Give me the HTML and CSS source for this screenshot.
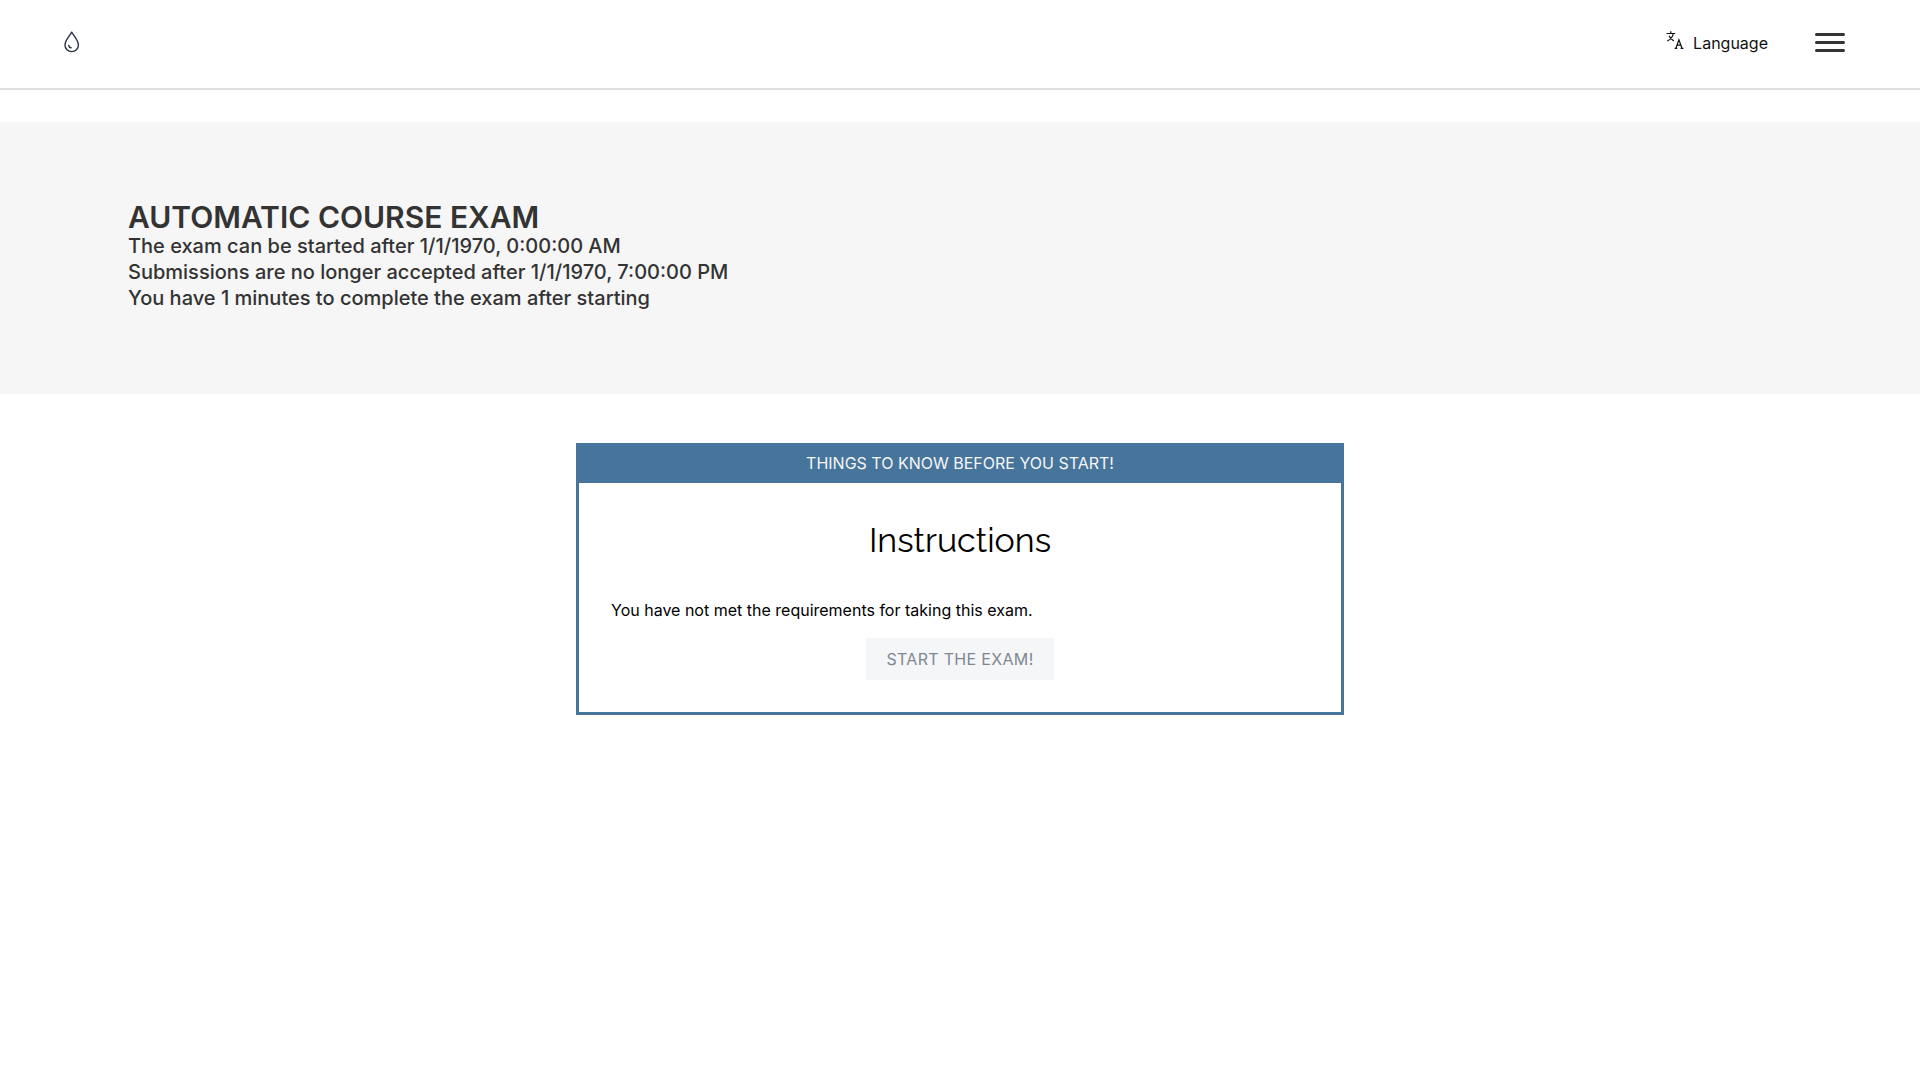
FILE: index.html
```html
<!DOCTYPE html>
<html lang="en">
<head>
<meta charset="utf-8">
<meta name="viewport" content="width=device-width, initial-scale=1">
<title>Automatic course exam</title>
<link rel="stylesheet" href="styles.css">
</head>
<body>
<header class="site-header">
  <a class="logo" href="#" aria-label="Home">
    <svg width="16" height="22" viewBox="0 0 16 22" fill="none" stroke="#2b3244" stroke-width="1.4" stroke-linecap="round" stroke-linejoin="round">
      <path d="M7.700 1.200C5.300 5.200 1 9.400 1 13.900C1 18 4 20.600 7.700 20.600S14.400 18 14.400 13.900C14.400 9.400 10.100 5.200 7.700 1.200Z"/>
      <path d="M4.700 14.500C4.900 15.800 5.800 16.600 7 16.700" stroke-width="1.600"/>
    </svg>
  </a>
  <nav class="site-nav" aria-label="Main">
    <button class="language" type="button">
      <svg class="language-icon" width="18" height="18" viewBox="0 0 18 18" fill="none" stroke="#111" stroke-width="1.200">
        <path d="M0.500 2.500H9.200M4.800 0.200V2.500M7.300 2.500C6.800 5.500 4.800 8.300 1.300 10M3 4.800C4 7 5.500 8.800 7.800 10"/>
        <path d="M9.900 17.200L12.900 8.800L16 17.200M10.800 14.200H15M8.600 17.400H11.200M14.600 17.400H17.400"/>
      </svg>
      <span>Language</span>
    </button>
    <button class="menu" type="button" aria-label="Open menu">
      <span class="menu-bar"></span>
      <span class="menu-bar"></span>
      <span class="menu-bar"></span>
    </button>
  </nav>
</header>
<main>
  <section class="banner">
    <h1 class="banner-title">AUTOMATIC COURSE EXAM</h1>
    <p class="banner-line">The exam can be started after 1/1/1970, 0:00:00 AM</p>
    <p class="banner-line">Submissions are no longer accepted after 1/1/1970, 7:00:00 PM</p>
    <p class="banner-line">You have 1 minutes to complete the exam after starting</p>
  </section>
  <section class="card">
    <div class="card-header">THINGS TO KNOW BEFORE YOU START!</div>
    <div class="card-body">
      <h2 class="card-title">Instructions</h2>
      <p class="card-text">You have not met the requirements for taking this exam.</p>
      <button class="start" type="button" disabled>START THE EXAM!</button>
    </div>
  </section>
</main>
</body>
</html>
```
FILE: styles.css
```css
* {
  box-sizing: border-box;
}

body {
  margin: 0;
  background: #fff;
  color: #000;
  font: 16px/24px Inter, sans-serif;
}

h1,
h2,
p {
  margin: 0;
}

button {
  border: 0;
  background: none;
  font: inherit;
}

.site-header {
  display: flex;
  align-items: center;
  justify-content: space-between;
  height: 90px;
  padding: 0 71px 4px 64px;
  border-bottom: 2px solid #dedede;
}

.logo svg {
  display: block;
}

.site-nav {
  display: flex;
  align-items: center;
  gap: 43px;
}

.language {
  display: flex;
  align-items: center;
  gap: 9px;
  padding: 2px 0 0;
  color: #111;
}

.language-icon {
  margin-bottom: 6px;
}

.menu {
  display: flex;
  flex-direction: column;
  gap: 5px;
  width: 38px;
  padding: 0 4px;
}

.menu-bar {
  height: 3px;
  border-radius: 2px;
  background: #333;
}

.banner {
  margin-top: 32px;
  padding: 79px 128px 83px;
  background: #f6f6f6;
  color: #333;
}

.banner-title {
  font-size: 30px;
  font-weight: 600;
  line-height: 32px;
}

.banner-line {
  font-size: 20px;
  font-weight: 500;
  line-height: 26px;
}

.card {
  width: 40%;
  margin: 49px auto;
  border: 3px solid #47749b;
}

.card-header {
  padding: 5px 16px 8px;
  background: #47749b;
  color: #f5f6f7;
  text-align: center;
}

.card-body {
  display: flex;
  flex-direction: column;
  align-items: center;
  padding: 32px;
}

.card-title {
  font: 400 34px/51px Raleway, Lato, sans-serif;
}

.card-text {
  align-self: stretch;
  margin: 32px 0 16px;
}

.start {
  padding: 9px 20px;
  background: #f5f6f8;
  color: #808791;
  letter-spacing: 0.02em;
}
```
